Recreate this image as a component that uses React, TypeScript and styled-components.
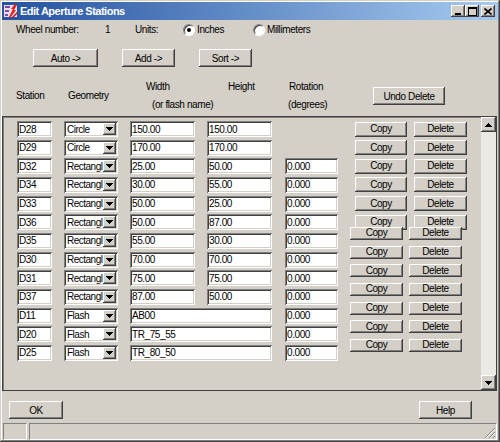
import React from 'react';
import styled, { createGlobalStyle, css } from 'styled-components';

const GlobalStyle = createGlobalStyle`
  html, body { margin: 0; padding: 0; background: #d4d0c8; }
  body {
    font-family: "Liberation Sans", Arial, sans-serif;
    font-size: 10px;
    letter-spacing: -0.4px;
    color: #000;
  }
  * { box-sizing: border-box; }
`;

const raised = css`
  background: #d4d0c8;
  border: none;
  box-shadow: inset -1px -1px #404040, inset 1px 1px #ffffff,
    inset -2px -2px #808080, inset 2px 2px #d4d0c8;
`;

const field = css`
  background: #ffffff;
  border: none;
  box-shadow: inset 1px 1px #808080, inset -1px -1px #ffffff,
    inset 2px 2px #404040, inset -2px -2px #d4d0c8;
`;

const Window = styled.div`
  width: 500px;
  height: 442px;
  padding: 2px;
  background: #d4d0c8;
  display: flex;
  flex-direction: column;
  overflow: hidden;
  box-shadow: inset -1px -1px #404040, inset 1px 1px #d4d0c8,
    inset -2px -2px #808080, inset 2px 2px #ffffff;
`;

const TitleBar = styled.div`
  height: 18px;
  flex: none;
  display: flex;
  align-items: center;
  padding: 0 3px 0 1px;
  background: linear-gradient(to right, #2352a0, #a6caf0);
`;

const TitleText = styled.span`
  flex: 1;
  margin-left: 1px;
  color: #ffffff;
  font-weight: bold;
  font-size: 11px;
  letter-spacing: -0.5px;
`;

const CaptionButton = styled.button<{ $gap?: boolean }>`
  ${raised};
  width: 14px;
  height: 12px;
  padding: 0;
  margin-left: ${(p) => (p.$gap ? 2 : 0)}px;
  display: flex;
  align-items: center;
  justify-content: center;
`;

const InfoRow = styled.div`
  height: 17px;
  margin-top: 1px;
  padding-left: 14px;
  display: grid;
  grid-template-columns: 89px 30px 48px 70px auto;
  align-items: center;
`;

const Radio = styled.label`
  display: flex;
  align-items: center;
  gap: 2px;
`;

const RadioCircle = styled.span<{ $on?: boolean }>`
  width: 12px;
  height: 12px;
  border-radius: 50%;
  background: #ffffff;
  border: 1px solid;
  border-color: #808080 #ffffff #ffffff #808080;
  box-shadow: inset 1px 1px #404040;
  display: flex;
  align-items: center;
  justify-content: center;
  &::after {
    content: '';
    width: 4px;
    height: 4px;
    border-radius: 50%;
    background: ${(p) => (p.$on ? '#000' : 'transparent')};
  }
`;

const ActionRow = styled.div`
  margin-top: 11px;
  height: 18px;
  padding-left: 31px;
  display: flex;
  gap: 24px;
`;

const PushButton = styled.button<{ $w: number }>`
  ${raised};
  width: ${(p) => p.$w}px;
  height: 18px;
  padding: 0;
  font: inherit;
  letter-spacing: inherit;
  color: #000;
`;

const Header = styled.div`
  margin-top: 11px;
  height: 36px;
  padding-left: 14px;
  display: flex;
`;

const HeadCell = styled.div<{ $w: number }>`
  width: ${(p) => p.$w}px;
  display: flex;
  flex-direction: column;
  justify-content: center;
`;

const HeadLine = styled.div<{ $indent?: number }>`
  height: 18px;
  line-height: 18px;
  padding-left: ${(p) => p.$indent ?? 0}px;
  white-space: nowrap;
`;

const UndoButton = styled(PushButton)`
  margin-top: 9px;
`;

const Panel = styled.div`
  margin-top: 2px;
  width: 495px;
  height: 275px;
  flex: none;
  border: 1px solid #404040;
  box-shadow: inset 1px 1px #808080;
  display: flex;
`;

const RowsArea = styled.div`
  flex: 1;
  padding: 4px 0 0 14px;
  display: grid;
  grid-auto-rows: 16px;
  row-gap: 2.667px;
  align-content: start;
`;

const Row = styled.div`
  display: flex;
  align-items: center;
  height: 16px;
`;

const TextBox = styled.input<{ $w: number; $gap?: number }>`
  ${field};
  width: ${(p) => p.$w}px;
  height: 16px;
  margin: 0 0 0 ${(p) => p.$gap ?? 0}px;
  padding: 0 2px;
  font: inherit;
  letter-spacing: inherit;
  color: #000;
  outline: none;
`;

const Blank = styled.div`
  width: 53px;
  margin-left: 13px;
`;

const GeoSelect = styled.div`
  ${field};
  width: 54px;
  height: 16px;
  margin-left: 12px;
  padding: 2px 2px 2px 3px;
  display: flex;
  align-items: center;
`;

const GeoText = styled.span`
  flex: 1;
  min-width: 0;
  white-space: nowrap;
  letter-spacing: -0.5px;
`;

const DropButton = styled.span`
  ${raised};
  width: 13px;
  height: 12px;
  flex: none;
  display: flex;
  align-items: center;
  justify-content: center;
`;

const ButtonPair = styled.div<{ $shift?: boolean }>`
  display: flex;
  margin-left: ${(p) => (p.$shift ? 12 : 17)}px;
  gap: ${(p) => (p.$shift ? 6 : 7)}px;
  align-self: ${(p) => (p.$shift ? 'flex-start' : 'center')};
  margin-top: ${(p) => (p.$shift ? -6 : 0)}px;
`;

const RowButton = styled.button<{ $w: number; $short?: boolean }>`
  ${raised};
  width: ${(p) => p.$w}px;
  height: ${(p) => (p.$short ? 13 : 15)}px;
  padding: 0;
  font: inherit;
  letter-spacing: inherit;
  color: #000;
  line-height: 1;
`;

const ScrollBar = styled.div`
  width: 15px;
  display: flex;
  flex-direction: column;
  background: #ebe9e4;
`;

const ScrollArrow = styled.div`
  ${raised};
  width: 15px;
  height: 15px;
  flex: none;
  display: flex;
  align-items: center;
  justify-content: center;
`;

const ScrollTrack = styled.div`
  flex: 1;
`;

const BottomRow = styled.div`
  margin-top: 10px;
  height: 18px;
  padding: 0 26px 0 7px;
  display: flex;
  justify-content: space-between;
`;

const StatusBar = styled.div`
  margin-top: 4px;
  height: 17px;
  padding: 0 1px;
  display: flex;
  gap: 2px;
`;

const StatusPane = styled.div<{ $w?: number }>`
  ${(p) => (p.$w ? `width: ${p.$w}px;` : 'flex: 1;')}
  height: 17px;
  border: 1px solid;
  border-color: #808080 #ffffff #ffffff #808080;
  display: flex;
`;

const Grip = styled.svg`
  margin-left: auto;
  align-self: flex-end;
`;

const Triangle = ({ up }: { up?: boolean }) => (
  <svg width="7" height="4" viewBox="0 0 7 4" shapeRendering="crispEdges">
    <path
      d={up ? 'M3 0h1v1h1v1h1v1h1v1H0V3h1V2h1V1h1z' : 'M0 0h7v1H6v1H5v1H4v1H3V3H2V2H1V1H0z'}
      fill="#000"
    />
  </svg>
);

const AppIcon = () => (
  <svg width="16" height="16" viewBox="0 0 16 16">
    <rect x="1" y="2" width="13" height="12" fill="#f2dbe6" />
    <path d="M2 3h5v2H2z M2 7h4v2H2z M2 11h3v2H2z" fill="#7a4aa8" />
    <path d="M6 14 L10 6 L8 6 L12 1 L14 2 L11 7 L13 7 L7 15 Z" fill="#e0201c" />
    <path d="M9 14 L14 9 L15 10 L10 15 Z" fill="#c01010" />
  </svg>
);

type Aperture = {
  st: string;
  geo: string;
  w: string;
  h?: string;
  rot?: string;
  shift?: boolean;
};

const rows: Aperture[] = [
  { st: 'D28', geo: 'Circle', w: '150.00', h: '150.00' },
  { st: 'D29', geo: 'Circle', w: '170.00', h: '170.00' },
  { st: 'D32', geo: 'Rectangl', w: '25.00', h: '50.00', rot: '0.000' },
  { st: 'D34', geo: 'Rectangl', w: '30.00', h: '55.00', rot: '0.000' },
  { st: 'D33', geo: 'Rectangl', w: '50.00', h: '25.00', rot: '0.000' },
  { st: 'D36', geo: 'Rectangl', w: '50.00', h: '87.00', rot: '0.000' },
  { st: 'D35', geo: 'Rectangl', w: '55.00', h: '30.00', rot: '0.000', shift: true },
  { st: 'D30', geo: 'Rectangl', w: '70.00', h: '70.00', rot: '0.000', shift: true },
  { st: 'D31', geo: 'Rectangl', w: '75.00', h: '75.00', rot: '0.000', shift: true },
  { st: 'D37', geo: 'Rectangl', w: '87.00', h: '50.00', rot: '0.000', shift: true },
  { st: 'D11', geo: 'Flash', w: 'AB00', rot: '0.000', shift: true },
  { st: 'D20', geo: 'Flash', w: 'TR_75_55', rot: '0.000', shift: true },
  { st: 'D25', geo: 'Flash', w: 'TR_80_50', rot: '0.000', shift: true },
];

export default function App() {
  return (
    <>
      <GlobalStyle />
      <Window>
        <TitleBar>
          <AppIcon />
          <TitleText>Edit Aperture Stations</TitleText>
          <CaptionButton aria-label="Minimize">
            <svg width="8" height="8" viewBox="0 0 8 8" shapeRendering="crispEdges">
              <rect x="1" y="6" width="6" height="2" fill="#000" />
            </svg>
          </CaptionButton>
          <CaptionButton aria-label="Maximize">
            <svg width="9" height="9" viewBox="0 0 9 9" shapeRendering="crispEdges">
              <path d="M0 0h9v9H0z M1 2v6h7V2z" fill="#000" fillRule="evenodd" />
            </svg>
          </CaptionButton>
          <CaptionButton $gap aria-label="Close">
            <svg width="8" height="7" viewBox="0 0 8 7">
              <path d="M0.5 0.5 L7.5 6.5 M7.5 0.5 L0.5 6.5" stroke="#000" strokeWidth="1.6" />
            </svg>
          </CaptionButton>
        </TitleBar>

        <InfoRow>
          <span>Wheel number:</span>
          <span>1</span>
          <span>Units:</span>
          <Radio>
            <RadioCircle $on />
            <span>Inches</span>
          </Radio>
          <Radio>
            <RadioCircle />
            <span>Millimeters</span>
          </Radio>
        </InfoRow>

        <ActionRow>
          <PushButton $w={65}>Auto -&gt;</PushButton>
          <PushButton $w={53}>Add -&gt;</PushButton>
          <PushButton $w={53}>Sort -&gt;</PushButton>
        </ActionRow>

        <Header>
          <HeadCell $w={52}>
            <HeadLine>Station</HeadLine>
          </HeadCell>
          <HeadCell $w={78}>
            <HeadLine>Geometry</HeadLine>
          </HeadCell>
          <HeadCell $w={82}>
            <HeadLine>Width</HeadLine>
            <HeadLine $indent={6}>(or flash name)</HeadLine>
          </HeadCell>
          <HeadCell $w={60}>
            <HeadLine>Height</HeadLine>
            <HeadLine>&nbsp;</HeadLine>
          </HeadCell>
          <HeadCell $w={85}>
            <HeadLine $indent={1}>Rotation</HeadLine>
            <HeadLine>(degrees)</HeadLine>
          </HeadCell>
          <UndoButton $w={72}>Undo Delete</UndoButton>
        </Header>

        <Panel>
          <RowsArea>
            {rows.map((r) => (
              <Row key={r.st}>
                <TextBox $w={35} defaultValue={r.st} readOnly />
                <GeoSelect>
                  <GeoText>{r.geo}</GeoText>
                  <DropButton>
                    <Triangle />
                  </DropButton>
                </GeoSelect>
                {r.h !== undefined ? (
                  <>
                    <TextBox $w={65} $gap={12} defaultValue={r.w} readOnly />
                    <TextBox $w={65} $gap={12} defaultValue={r.h} readOnly />
                  </>
                ) : (
                  <TextBox $w={142} $gap={12} defaultValue={r.w} readOnly />
                )}
                {r.rot !== undefined ? (
                  <TextBox $w={53} $gap={13} defaultValue={r.rot} readOnly />
                ) : (
                  <Blank />
                )}
                <ButtonPair $shift={r.shift}>
                  <RowButton $w={r.shift ? 53 : 52} $short={r.shift}>
                    Copy
                  </RowButton>
                  <RowButton $w={53} $short={r.shift}>
                    Delete
                  </RowButton>
                </ButtonPair>
              </Row>
            ))}
          </RowsArea>
          <ScrollBar>
            <ScrollArrow>
              <Triangle up />
            </ScrollArrow>
            <ScrollTrack />
            <ScrollArrow>
              <Triangle />
            </ScrollArrow>
          </ScrollBar>
        </Panel>

        <BottomRow>
          <PushButton $w={54}>OK</PushButton>
          <PushButton $w={53}>Help</PushButton>
        </BottomRow>

        <StatusBar>
          <StatusPane $w={24} />
          <StatusPane>
            <Grip width="12" height="12" viewBox="0 0 12 12">
              <path d="M11 1 L1 11 M11 5 L5 11 M11 9 L9 11" stroke="#808080" strokeWidth="1" />
              <path d="M11 2 L2 11 M11 6 L6 11 M11 10 L10 11" stroke="#ffffff" strokeWidth="1" />
            </Grip>
          </StatusPane>
        </StatusBar>
      </Window>
    </>
  );
}
